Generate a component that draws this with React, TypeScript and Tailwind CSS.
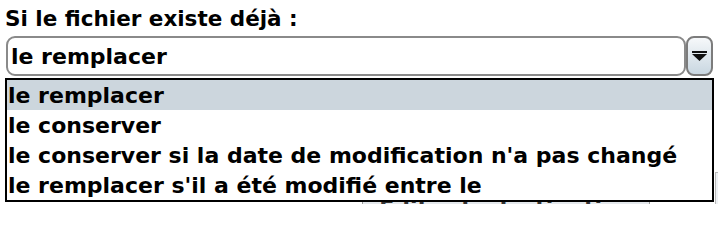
import React from "react";

const items = [
  "le remplacer",
  "le conserver",
  "le conserver si la date de modification n'a pas changé",
  "le remplacer s'il a été modifié entre le",
];

export default function App() {
  return (
    <div
      className="relative w-[718px] h-[204px] overflow-hidden bg-white text-black"
      style={{ fontFamily: '"DejaVu Sans", Verdana, sans-serif' }}
    >
      {/* window content partly hidden behind the popup */}
      <div className="absolute left-[362px] top-[199px] w-[288px] h-[24px] border border-[#9a9a9a] bg-[#e4e8ec] rounded-[3px] flex justify-center overflow-hidden">
        <span className="text-[22px] font-bold leading-[22px] text-[#333] -mt-[2px]">Éditer la destination</span>
      </div>
      <div className="absolute left-[715px] top-[172px] w-[10px] h-[40px] border-l border-t border-[#b8b8b8] bg-[#eef1f4]" />

      <div className="px-[5px] pt-[7px] text-[21.5px] font-bold leading-[24px]">Si le fichier existe déjà :</div>
      <div className="relative mt-[5px]">
        <div className="flex pl-[6px] pr-[5px] h-[40px]">
          <div className="flex-1 border-2 border-[#8a8a8a] rounded-[9px] bg-white flex items-center pl-[3px] text-[22px] font-bold">
            le remplacer
          </div>
          <div className="w-[27px] border-2 border-[#7c7c7c] rounded-[8px] bg-gradient-to-b from-[#f6f8fa] to-[#c9d7e1] flex items-center justify-center">
            <svg width="15" height="10" viewBox="0 0 15 10">
              <rect x="0" y="0" width="15" height="2" fill="#111" />
              <polygon points="0,3 15,3 7.5,10" fill="#111" />
            </svg>
          </div>
        </div>
        <div className="absolute left-[5px] top-[42px] w-[709px] h-[124px] border-2 border-black bg-white">
          {items.map((t, i) => (
            <div
              key={i}
              className={`h-[30px] flex items-center pl-[1px] text-[22px] font-bold whitespace-nowrap ${i === 0 ? "bg-[#ccd6dd]" : ""}`}
            >
              {t}
            </div>
          ))}
        </div>
      </div>
    </div>
  );
}
